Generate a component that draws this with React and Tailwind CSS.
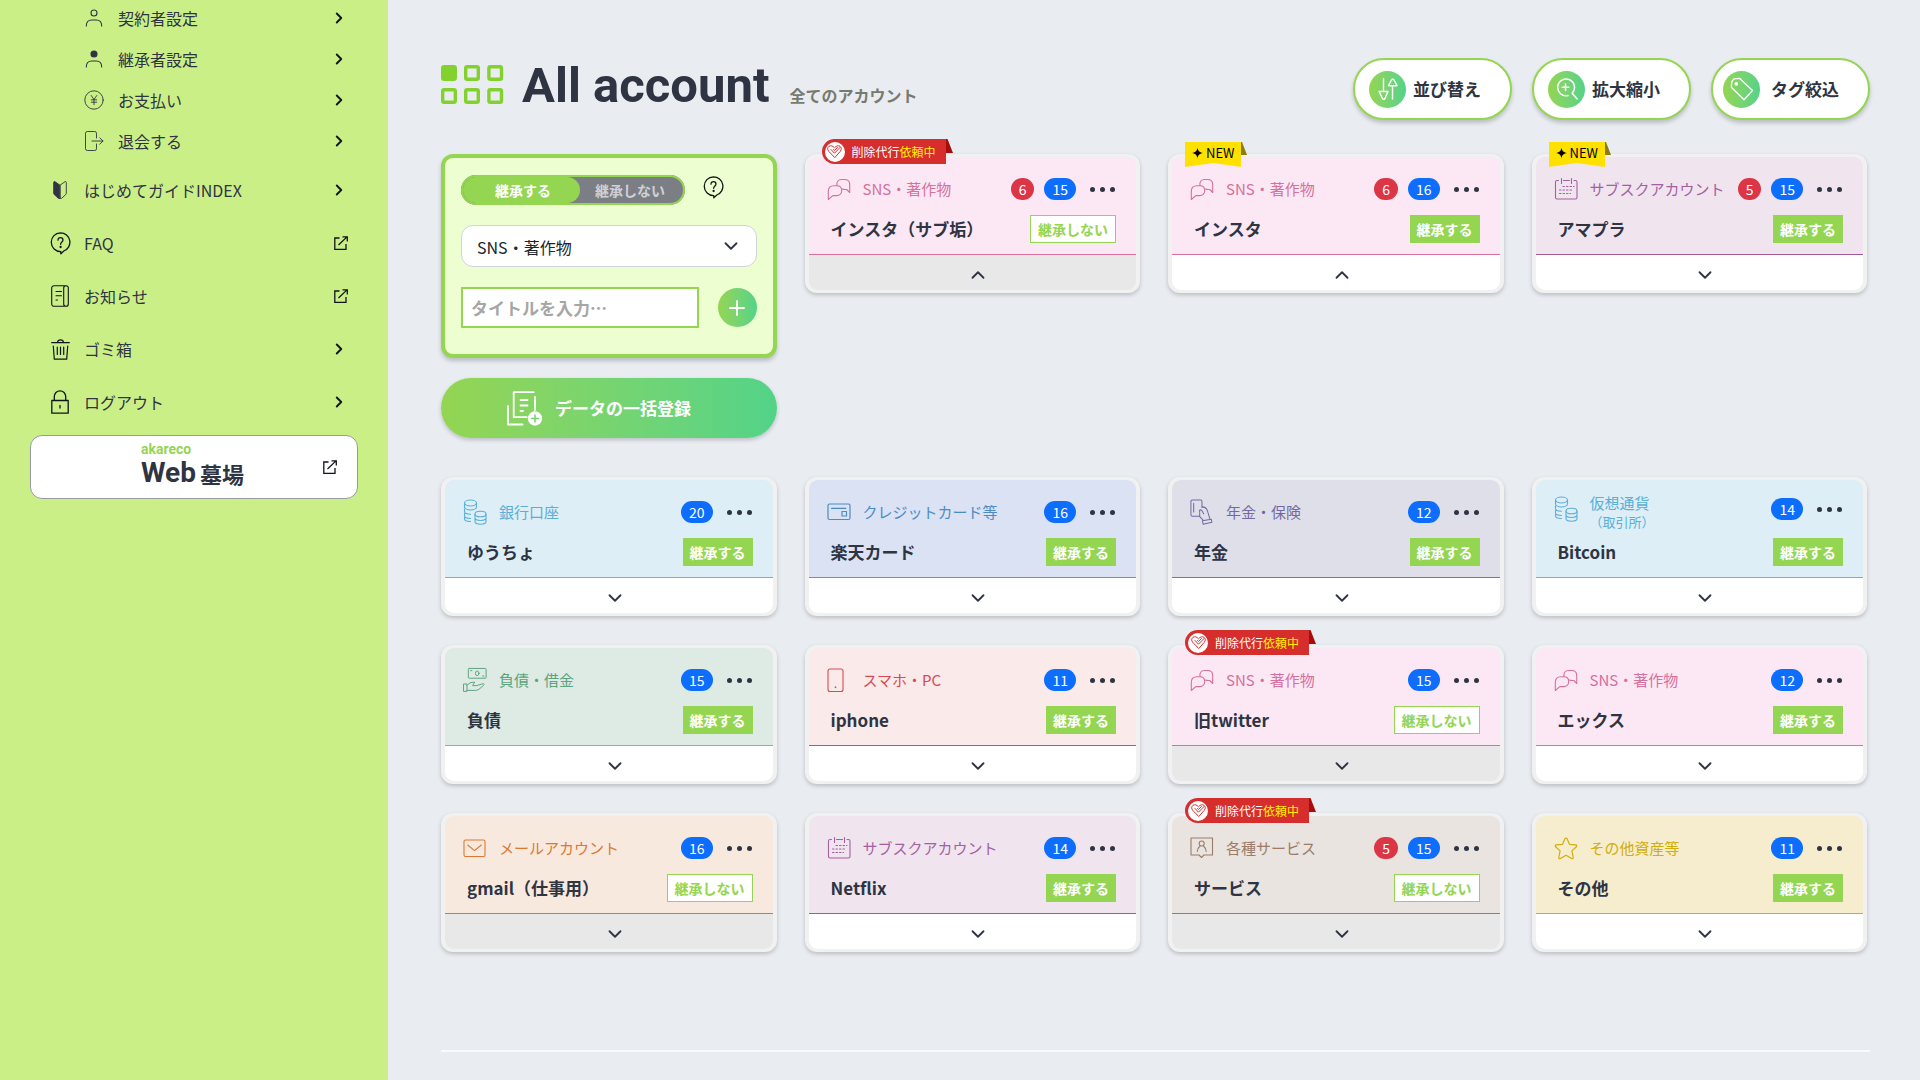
import React, { useState } from 'react';
import { ChevronDown, ChevronRight, ChevronUp } from 'lucide-react';

const line = { fill: 'none', stroke: 'currentColor', strokeLinecap: 'round', strokeLinejoin: 'round' };

/* ---------- Sidebar icons ---------- */

const UserIcon = ({ filled }) => (
  <svg width="18" height="18" viewBox="0 0 18 18" {...line} strokeWidth="1.1">
    <circle cx="9" cy="4" r="3" fill={filled ? 'currentColor' : 'none'} />
    <path d="M1.3 17c0-4 2.500-6 5.500-6h4.400c3 0 5.500 2 5.500 6" />
  </svg>
);

const YenIcon = () => (
  <svg width="20" height="20" viewBox="0 0 20 20" {...line} strokeWidth="0.9">
    <circle cx="10" cy="10" r="9.200" />
    <path d="M7.200 5.500 10 9.500l2.800-4M10 9.500v5.200M7.300 9.800h5.400M7.300 12.200h5.400" />
  </svg>
);

const LeaveIcon = () => (
  <svg width="20" height="20" viewBox="0 0 20 20" {...line} strokeWidth="0.9">
    <path d="M12.500 7V2.300A1.800 1.800 0 0 0 10.700.5H3.300A1.800 1.800 0 0 0 1.500 2.300v15.400a1.800 1.800 0 0 0 1.800 1.800h7.400a1.800 1.800 0 0 0 1.800-1.800V13M8 10h11M15.800 6.800 19 10l-3.200 3.200" />
  </svg>
);

const BeginnerIcon = () => (
  <svg width="14" height="18" viewBox="0 0 14 18" {...line} strokeWidth="0.9">
    <path d="M6.700 4 2 .7C1.200.3.7.6.7 1.400v10.800c0 .6.2 1 .6 1.400L5.500 17.400h1.200z" fill="currentColor" />
    <path d="M7.300 4 12 .7c.8-.4 1.300-.1 1.300.7v10.800c0 .6-.2 1-.6 1.400L8.500 17.400H7.300z" />
  </svg>
);

const HelpIcon = () => (
  <svg width="21" height="23" viewBox="0 0 21 23" {...line} strokeWidth="1.300">
    <path d="M10.500.8a9.400 9.400 0 0 1 3.300 18.200l-3 2.900v-2.300A9.400 9.400 0 1 1 10.500.8Z" />
    <path d="M8 8.200C8 6.600 9 5.600 10.500 5.600s2.500 1 2.500 2.400c0 1.900-2.400 2.100-2.400 4.300" />
    <circle cx="10.600" cy="15" r=".5" fill="currentColor" />
  </svg>
);

const NewsIcon = () => (
  <svg width="18" height="22" viewBox="0 0 18 22" {...line} strokeWidth="1.100">
    <path d="M15 .7H3A2.300 2.300 0 0 0 .7 3v16A2.300 2.300 0 0 0 3 21.300h12M15 .7c-1.400 0-2.300.8-2.300 2.300v16c0 1.400.8 2.300 2.300 2.300s2.300-.9 2.300-2.300V3c0-1.500-.9-2.300-2.300-2.300Z" />
    <path d="M5 6.500h5.500M5 10.700h5.500M5 15h1.500" />
  </svg>
);

const TrashIcon = () => (
  <svg width="19" height="21" viewBox="0 0 19 21" {...line} strokeWidth="1.200">
    <path d="M.7 3.700h17.600M6.500 3.500c.2-1.800 1.200-2.700 3-2.700s2.800.9 3 2.700M2.300 7l1 13.200h12.400l1-13.200M6.300 8v7.500M9.500 8v7.500M12.700 8v7.500" />
  </svg>
);

const LockIcon = () => (
  <svg width="18" height="24" viewBox="0 0 18 24" {...line} strokeWidth="1.300">
    <path d="M.8 10.500h16.400v12.700H.8zM3.300 10.500V6.500a5.700 5.700 0 0 1 11.400 0v4M9 15.500v2.500" />
  </svg>
);

const ExternalIcon = () => (
  <svg width="14" height="14" viewBox="0 0 14 14" fill="none" stroke="#10151c" strokeWidth="1.300">
    <path d="M5.500 2H.8v11.300H12V8M4.500 9 13 .9M8.500.8h4.800v4.700" />
  </svg>
);

/* ---------- Toolbar icons ---------- */

const SortIcon = () => (
  <svg width="20" height="22" viewBox="0 0 20 22" {...line} strokeWidth="1.400">
    <path d="M5.500.8v12M1 13.500h9L7 20.400c-.5 1.200-2 1.200-2.600 0zM14.500 21V8M10.500 7.700h8.500L16 2c-.6-1.100-1.900-1.100-2.500 0z" />
  </svg>
);

const ZoomIcon = () => (
  <svg width="22" height="22" viewBox="0 0 22 22" {...line} strokeWidth="1.500">
    <path d="M12 17.600a8.400 8.400 0 1 1 4.200-2.400l5 5.800M9.500 6v6.600M6.200 9.300h6.600" />
  </svg>
);

const TagIcon = () => (
  <svg width="24" height="24" viewBox="0 0 24 24" {...line} strokeWidth="1.300">
    <path d="M1.800 4.700 4 1.800 9.500 1.300 22.500 13.500 14 22.700 1.300 10.200z" />
    <circle cx="6.300" cy="6.800" r="1.200" fill="currentColor" />
  </svg>
);

const BulkIcon = () => (
  <svg width="36" height="35" viewBox="0 0 36 35" {...line} strokeWidth="1.800">
    <path d="M6.700 1.200h20M28 6v13M6.700 1.200v25h13M1 15v18.500h14.500M13.500 9h7M13.500 14.500h7M13.500 20h2.500" />
    <circle cx="28" cy="27.500" r="7.200" fill="#fff" stroke="none" />
    <path d="M28 24v7M24.500 27.500h7" stroke="#71d46c" strokeWidth="1.500" />
  </svg>
);

/* ---------- Category icons ---------- */

const ChatIcon = () => (
  <svg width="24" height="24" viewBox="0 0 24 24" {...line} strokeWidth="1.1">
    <path d="M10 8.500C9.300 4.500 11.500 2.500 14.500 2.500h3c3 0 5.200 2 5.200 5v8l-3-3c-1.500 0-3 .2-4.200-.5" />
    <path d="M1.300 22.500v-8c0-3.400 2.300-5.700 5.700-5.700h2.700c3 0 5 2 5 4.800s-2 5-5 5H5.800z" />
  </svg>
);

const CalendarIcon = () => (
  <svg width="24" height="24" viewBox="0 0 24 24" {...line} strokeWidth="1.100">
    <path d="M4.500 3.500H3A1.500 1.500 0 0 0 1.500 5v15.500A1.500 1.500 0 0 0 3 22h18.500a1.500 1.500 0 0 0 1.500-1.500V5a1.500 1.500 0 0 0-1.500-1.500H20M9.500 3.500h6M7.500 1.500v5M17.500 1.500v5" />
    <path d="M9 9.500h11M5.500 13h14M5.500 16.500h11" strokeDasharray="1.500 2" />
  </svg>
);

const CoinsIcon = () => (
  <svg width="24" height="26" viewBox="0 0 24 26" {...line} strokeWidth="1.100">
    <ellipse cx="7.500" cy="4" rx="6" ry="3" />
    <path d="M1.500 4v4c0 1.600 2.700 3 6 3s6-1.400 6-3V4M1.500 10v2.500c0 1.600 2.700 2.700 6 2.700M1.500 14.500v2.300c0 1.600 2.700 2.700 6 2.700M1.500 18.500v1.500c0 1.600 2.700 2.500 6 2.500" />
    <ellipse cx="17.500" cy="15" rx="5.500" ry="2.800" />
    <path d="M12 15v7.500c0 1.500 2.500 2.700 5.500 2.700s5.500-1.200 5.500-2.700V15M12 18.800c0 1.500 2.500 2.700 5.500 2.700s5.500-1.200 5.500-2.700" />
  </svg>
);

const CardIcon = () => (
  <svg width="24" height="18" viewBox="0 0 24 18" {...line} strokeWidth="1.200">
    <rect x="1" y="1" width="22" height="15.500" rx="1.500" />
    <path d="M4.500 5.300h14.300" />
    <rect x="15" y="8.500" width="4.500" height="4.500" />
  </svg>
);

const PensionIcon = () => (
  <svg width="26" height="28" viewBox="0 0 26 28" {...line} strokeWidth="1.100">
    <path d="M13 9V2.500A1.500 1.500 0 0 0 11.500 1h-9A1.500 1.500 0 0 0 1 2.500V17a1.500 1.500 0 0 0 1.500 1.500h8M4 4.500V14" />
    <path d="M13 8.500c2.500-.3 5 1.500 6 4.500l2.500 8.500M10.500 13.500c-1-1.500 1-2.600 2.300-1l2 3.500M10.500 14.500v4.500l3.500 3.500M13.500 23.500l9.500-1.700.7 3.400-9.500 2z" />
  </svg>
);

const DebtIcon = () => (
  <svg width="27" height="28" viewBox="0 0 27 28" {...line} strokeWidth="1.100">
    <rect x="6" y="1" width="20" height="11" rx="1" />
    <ellipse cx="16" cy="6.500" rx="2" ry="2.600" />
    <path d="M8.500 3.500h1.500M22 9.500h1.500M1 18.500h3.500v8.300H1zM4.500 20c3-3.500 6-3.800 9-3.300-2.500 1.300-1.200 1.800-2.700 3.600h4.700l6-1.900c2-.7 3 .5 1.600 1.600-4 3.500-6 5.700-9 5.700H4.500" />
  </svg>
);

const PhoneIcon = () => (
  <svg width="18" height="25" viewBox="0 0 18 25" {...line} strokeWidth="1.100">
    <rect x="1" y="1" width="15" height="22.500" rx="2" />
    <path d="M8.500 19v.3" strokeWidth="1.700" />
  </svg>
);

const MailIcon = () => (
  <svg width="24" height="19" viewBox="0 0 24 19" {...line} strokeWidth="1.100">
    <rect x="1" y="1" width="21" height="16.500" rx="1.500" />
    <path d="m4.700 6 6.800 5.600L18.300 6" />
  </svg>
);

const ServiceIcon = () => (
  <svg width="24" height="22" viewBox="0 0 24 22" {...line} strokeWidth="1.100">
    <path d="M1 1h21.500v17h-8.500l-2.500 2.500L9 18H1z" />
    <circle cx="11.700" cy="6.500" r="2.500" />
    <path d="M7.300 14.500c.3-2.500 1.500-4.500 2.700-5.500M16.200 14.500c-.3-2.500-1.500-4.500-2.700-5.500" />
  </svg>
);

const StarIcon = () => (
  <svg width="24" height="23" viewBox="0 0 24 23" {...line} strokeWidth="1.200">
    <path d="M10.900 1.700c.4-.9 1.800-.9 2.200 0l2.400 5.600 6.300.6c1 .1 1.300 1.200.6 1.900l-4.500 4.100 1.300 6.600c.2 1-.8 1.600-1.600 1.100L12 18.300l-5.600 3.300c-.8.5-1.800-.1-1.600-1.100l1.300-6.600L1.600 9.800c-.7-.7-.4-1.800.6-1.900l6.300-.6z" />
  </svg>
);

const categories = {
  sns: { label: 'SNS・著作物', icon: ChatIcon, box: 'bg-[#fbe8f4] border-[#d6709c]', text: 'text-[#d6709c]' },
  subsc: { label: 'サブスクアカウント', icon: CalendarIcon, box: 'bg-[#f0e5ef] border-[#a05a9c]', text: 'text-[#a460a0]' },
  bank: { label: '銀行口座', icon: CoinsIcon, box: 'bg-[#ddeef7] border-[#6ab3da]', text: 'text-[#5aafd6]' },
  crypto: { label: '仮想通貨', sub: '（取引所）', icon: CoinsIcon, box: 'bg-[#ddeef7] border-[#6ab3da]', text: 'text-[#5aafd6]' },
  credit: { label: 'クレジットカード等', icon: CardIcon, box: 'bg-[#dae2f4] border-[#5a98cc]', text: 'text-[#4c8cc4]' },
  pension: { label: '年金・保険', icon: PensionIcon, box: 'bg-[#dfdfe9] border-[#7d72ad]', text: 'text-[#7468a4]' },
  debt: { label: '負債・借金', icon: DebtIcon, box: 'bg-[#ddebe4] border-[#7dbb98]', text: 'text-[#5ba37e]' },
  phone: { label: 'スマホ・PC', icon: PhoneIcon, box: 'bg-[#faebea] border-[#d94a55]', text: 'text-[#d94a55]' },
  mail: { label: 'メールアカウント', icon: MailIcon, box: 'bg-[#f8e9de] border-[#dd7832]', text: 'text-[#dd7832]' },
  service: { label: '各種サービス', icon: ServiceIcon, box: 'bg-[#e9e4e0] border-[#9c7c68]', text: 'text-[#9c7c68]' },
  other: { label: 'その他資産等', icon: StarIcon, box: 'bg-[#f5edcd] border-[#d1ae0c]', text: 'text-[#d1ae0c]' }
};

const newAccounts = [
  { title: 'インスタ（サブ垢）', category: 'sns', red: 6, blue: 15, inherit: false, ribbon: 'delete', open: true },
  { title: 'インスタ', category: 'sns', red: 6, blue: 16, inherit: true, ribbon: 'new', open: true },
  { title: 'アマプラ', category: 'subsc', red: 5, blue: 15, inherit: true, ribbon: 'new' }
];

const accounts = [
  { title: 'ゆうちょ', category: 'bank', blue: 20, inherit: true },
  { title: '楽天カード', category: 'credit', blue: 16, inherit: true },
  { title: '年金', category: 'pension', blue: 12, inherit: true },
  { title: 'Bitcoin', category: 'crypto', blue: 14, inherit: true },
  { title: '負債', category: 'debt', blue: 15, inherit: true },
  { title: 'iphone', category: 'phone', blue: 11, inherit: true },
  { title: '旧twitter', category: 'sns', blue: 15, inherit: false, ribbon: 'delete' },
  { title: 'エックス', category: 'sns', blue: 12, inherit: true },
  { title: 'gmail（仕事用）', category: 'mail', blue: 16, inherit: false },
  { title: 'Netflix', category: 'subsc', blue: 14, inherit: true },
  { title: 'サービス', category: 'service', red: 5, blue: 15, inherit: false, ribbon: 'delete' },
  { title: 'その他', category: 'other', blue: 11, inherit: true }
];

const subMenu = [
  { label: '契約者設定', icon: <UserIcon /> },
  { label: '継承者設定', icon: <UserIcon filled /> },
  { label: 'お支払い', icon: <YenIcon /> },
  { label: '退会する', icon: <LeaveIcon /> }
];

const mainMenu = [
  { label: 'はじめてガイドINDEX', icon: <BeginnerIcon /> },
  { label: 'FAQ', icon: <HelpIcon />, external: true, dark: true },
  { label: 'お知らせ', icon: <NewsIcon />, external: true, dark: true },
  { label: 'ゴミ箱', icon: <TrashIcon />, dark: true },
  { label: 'ログアウト', icon: <LockIcon />, dark: true }
];

function DeleteRibbon() {
  return (
    <div className="absolute -top-[18px] left-[13px] flex">
      <div className="flex h-[25px] items-center rounded-l-full bg-[#d62d2d] pr-[10px] pl-[3px] text-xs text-white">
        <span className="mr-[7px] flex size-5 items-center justify-center rounded-full bg-white text-[#d62d2d]">
          <svg width="15" height="13" viewBox="0 0 15 13" {...line} strokeWidth="1">
            <path d="M7.500 12.300 1.600 6.200C.2 4.500.5 2.300 2 1.300s3.700-.7 5.500 1.500C9.300.6 11.500.3 13 1.300s1.800 3.200.4 4.900z" />
            <path d="m4 4.500 3.500 3.700L13 2.500M6.500 4.500l1 1 3-3" />
          </svg>
        </span>
        削除代行<span className="text-[#fff200]">依頼中</span>
      </div>
      <svg width="7" height="14" viewBox="0 0 7 14">
        <path d="M0 0h1.500L7 14H0z" fill="#a80d0d" />
      </svg>
    </div>
  );
}

function NewRibbon() {
  return (
    <div className="absolute -top-[15px] left-[13px] flex">
      <div className="flex h-[25px] items-center gap-[3px] bg-[#ffe100] px-[7px] pb-1 text-[13px] text-black [clip-path:polygon(0_0,100%_0,100%_100%,50%_84%,0_100%)]">
        <svg width="11" height="12" viewBox="0 0 12 12">
          <path d="M6 0c.5 3.500 1.800 5.300 6 6-4.200.7-5.500 2.500-6 6-.5-3.500-1.800-5.300-6-6 4.200-.7 5.500-2.500 6-6Z" />
        </svg>
        NEW
      </div>
      <svg width="6" height="13" viewBox="0 0 6 13">
        <path d="M0 0h1L6 13H0z" fill="#8c7c0b" />
      </svg>
    </div>
  );
}

function AccountCard({ account }) {
  const [open, setOpen] = useState(!!account.open);
  const category = categories[account.category];
  const Icon = category.icon;

  return (
    <article className="relative rounded-xl border-x-4 border-y-[3px] border-[#f1f1f1] bg-[#f1f1f1] shadow-[0_2px_4px_rgba(0,0,0,0.2)]">
      {account.ribbon === 'delete' && <DeleteRibbon />}
      {account.ribbon === 'new' && <NewRibbon />}
      <div className={`rounded-t-[9px] border-b pt-[10px] pr-5 pb-[11px] pl-[18px] ${category.box}`}>
        <div className={`flex h-11 justify-between ${category.sub ? 'items-start pt-[3px]' : 'items-center'}`}>
          <div className={`flex gap-3 ${category.sub ? 'items-start' : 'items-center'} ${category.text}`}>
            <span className="flex h-8 w-6 shrink-0 items-center">
              <Icon />
            </span>
            <p className="text-[15px] leading-5 whitespace-nowrap">
              {category.label}
              {category.sub && <span className="block text-[13px] leading-[17px]">{category.sub}</span>}
            </p>
          </div>
          <div className="flex h-8 items-center text-sm text-white">
            {account.red && (
              <span className="mr-[10px] flex h-[22px] items-center rounded-full bg-[#dc3545] px-2">{account.red}</span>
            )}
            <span className="mr-[13px] flex h-[22px] items-center rounded-full bg-[#0d6efd] px-2">{account.blue}</span>
            <button type="button" aria-label="メニュー" className="flex h-5 items-center gap-[5px] px-px">
              <span className="size-[5px] rounded-full bg-[#2f3443]" />
              <span className="size-[5px] rounded-full bg-[#2f3443]" />
              <span className="size-[5px] rounded-full bg-[#2f3443]" />
            </button>
          </div>
        </div>
        <div className="mt-1 flex h-7 items-center justify-between pl-1">
          <h3 className="text-[17px] font-bold whitespace-nowrap text-[#2f3443]">{account.title}</h3>
          {account.inherit ? (
            <span className="flex h-7 items-center bg-[#94d552] px-[7px] text-sm font-bold text-white">継承する</span>
          ) : (
            <span className="flex h-7 items-center border border-[#94d552] bg-white px-[7px] text-sm font-bold text-[#94d552]">
              継承しない
            </span>
          )}
        </div>
      </div>
      <button
        type="button"
        aria-label={open ? '閉じる' : '開く'}
        onClick={() => setOpen(!open)}
        className={`flex h-[35px] w-full items-center justify-center rounded-b-[9px] pt-1 pl-3 text-[#2f3443] ${account.inherit ? 'bg-white' : 'bg-[#e8e8e8]'}`}
      >
        {open ? <ChevronUp size={22} strokeWidth={2} /> : <ChevronDown size={22} strokeWidth={2} />}
      </button>
    </article>
  );
}

function ToolButton({ icon, label, className }) {
  return (
    <button
      type="button"
      className={`flex h-[62px] w-[159px] items-center rounded-full border-2 border-[#94d552] bg-white text-[17px] font-bold text-[#2f3443] shadow-[0_3px_4px_rgba(0,0,0,0.2)] ${className}`}
    >
      <span className="flex size-[37px] items-center justify-center rounded-full bg-linear-to-r from-[#94d552] to-[#52d388] text-white">
        {icon}
      </span>
      {label}
    </button>
  );
}

function Sidebar() {
  return (
    <aside className="w-[388px] shrink-0 bg-[#cbef87] text-base leading-6 text-[#2f3443]">
      <nav className="pt-[6px]">
        <ul className="flex flex-col gap-[17px]">
          {subMenu.map((item) => (
            <li key={item.label}>
              <a href="#" className="flex h-6 items-center pr-10 pl-[82px]">
                <span className="mr-3 flex w-6 justify-center">{item.icon}</span>
                {item.label}
                <ChevronRight size={18} strokeWidth={2.5} className="ml-auto text-[#10151c]" />
              </a>
            </li>
          ))}
        </ul>
        <ul className="mt-[25px] flex flex-col gap-[29px]">
          {mainMenu.map((item) => (
            <li key={item.label}>
              <a href="#" className="flex h-6 items-center pr-10 pl-12">
                <span className={`mr-3 flex w-6 justify-center ${item.dark ? 'text-[#10151c]' : ''}`}>{item.icon}</span>
                {item.label}
                <span className="ml-auto flex w-[18px] justify-end text-[#10151c]">
                  {item.external ? <ExternalIcon /> : <ChevronRight size={18} strokeWidth={2.5} />}
                </span>
              </a>
            </li>
          ))}
        </ul>
      </nav>
      <a
        href="#"
        className="mx-[30px] mt-[21px] flex h-16 items-center rounded-xl border border-[#979aa1] bg-white pr-5"
      >
        <span className="ml-[110px] flex flex-col pb-1 font-bold">
          <span className="font-['Roboto',sans-serif] text-sm leading-4 text-[#94d552]">akareco</span>
          <span className="flex items-center gap-1 text-[22px] leading-8 whitespace-nowrap">
            <span className="font-['Roboto',sans-serif] text-[28px] leading-8">Web</span>
            墓場
          </span>
        </span>
        <span className="ml-auto">
          <ExternalIcon />
        </span>
      </a>
    </aside>
  );
}

function RegisterPanel() {
  const [inherit, setInherit] = useState(true);
  const [title, setTitle] = useState('');

  return (
    <div>
      <form
        onSubmit={(e) => e.preventDefault()}
        className="rounded-xl border-4 border-[#94d552] bg-[#edffd1] px-4 pt-[17px] pb-[26px] shadow-[0_3px_4px_rgba(0,0,0,0.2)]"
      >
        <div className="flex items-start">
          <fieldset className="flex h-[30px] w-56 overflow-hidden rounded-full border-2 border-[#94d552] bg-[#7c7e86] text-sm font-bold">
            <label className="flex w-[117px] items-center justify-center rounded-r-full bg-[#94d552] pl-[3px] text-white">
              <input type="radio" name="inherit" className="sr-only" checked={inherit} onChange={() => setInherit(true)} />
              継承する
            </label>
            <label className="flex flex-1 items-center justify-center pr-[3px] text-[#cfd0d4]">
              <input type="radio" name="inherit" className="sr-only" checked={!inherit} onChange={() => setInherit(false)} />
              継承しない
            </label>
          </fieldset>
          <button type="button" aria-label="ヘルプ" className="mt-px ml-[18px] text-[#10151c]">
            <HelpIcon />
          </button>
        </div>
        <div className="mt-5 grid items-center">
          <select
            aria-label="カテゴリー"
            className="col-start-1 row-start-1 h-[42px] w-full appearance-none rounded-xl border border-[#ced4da] bg-white pt-[2px] pl-[15px] text-base text-[#212529]"
          >
            <option>SNS・著作物</option>
          </select>
          <ChevronDown size={22} className="pointer-events-none col-start-1 row-start-1 mr-[15px] justify-self-end text-[#2f3443]" />
        </div>
        <div className="mt-5 flex items-center justify-between">
          <input
            type="text"
            aria-label="タイトル"
            value={title}
            onChange={(e) => setTitle(e.target.value)}
            placeholder="タイトルを入力…"
            className="h-[41px] w-[238px] border-2 border-[#94d552] bg-white px-2 text-[17px] font-bold placeholder:text-[#a6a6a6]"
          />
          <button
            type="submit"
            aria-label="追加"
            className="flex size-[39px] items-center justify-center rounded-full bg-linear-to-r from-[#94d552] to-[#52d388] text-white"
          >
            <svg width="16" height="16" viewBox="0 0 16 16" {...line} strokeWidth="1.800">
              <path d="M8 1v14M1 8h14" />
            </svg>
          </button>
        </div>
      </form>
      <button
        type="button"
        className="mt-5 flex h-[60px] w-full items-center gap-3 rounded-full bg-linear-to-r from-[#94d552] to-[#52d388] pl-[66px] text-[17px] font-bold text-white shadow-[0_2px_4px_rgba(0,0,0,0.2)]"
      >
        <BulkIcon />
        データの一括登録
      </button>
    </div>
  );
}

export default function App() {
  return (
    <div className="flex min-h-screen bg-[#e9edf2] font-['Noto_Sans_CJK_JP','Noto_Sans',sans-serif]">
      <Sidebar />
      <main className="min-w-0 flex-1 pt-[58px] pr-[50px] pl-[53px]">
        <header className="flex h-[62px] items-start justify-between">
          <div className="flex">
            <svg className="mt-[7px]" width="63" height="40" viewBox="0 0 63 40" fill="none" stroke="#83d12e" strokeWidth="3.400">
              <rect x="1.700" y="1.700" width="12.600" height="12.600" rx="1.500" fill="#83d12e" />
              <rect x="24.700" y="1.700" width="12.600" height="12.600" rx="1.500" />
              <rect x="47.900" y="1.700" width="12.600" height="12.600" rx="1.500" />
              <rect x="1.700" y="24.700" width="12.600" height="12.600" rx="1.500" />
              <rect x="24.700" y="24.700" width="12.600" height="12.600" rx="1.500" />
              <rect x="47.900" y="24.700" width="12.600" height="12.600" rx="1.500" />
            </svg>
            <h1 className="ml-[18px] flex items-baseline gap-5 font-['Roboto',sans-serif] text-[49px] leading-[56px] font-bold text-[#2f3443]">
              All account
              <small className="font-['Noto_Sans_CJK_JP',sans-serif] text-base font-bold text-[#777a6c]">
                全てのアカウント
              </small>
            </h1>
          </div>
          <div className="flex gap-5">
            <ToolButton icon={<SortIcon />} label="並び替え" className="gap-[7px] pl-[14px]" />
            <ToolButton icon={<ZoomIcon />} label="拡大縮小" className="gap-[7px] pl-[14px]" />
            <ToolButton icon={<TagIcon />} label="タグ絞込" className="gap-[11px] pl-[10px]" />
          </div>
        </header>

        <section className="mt-[34px] grid grid-cols-4 items-start gap-7 pr-[3px]">
          <RegisterPanel />
          {newAccounts.map((account) => (
            <AccountCard key={account.title} account={account} />
          ))}
        </section>

        <section className="mt-[39px] grid grid-cols-4 gap-x-7 gap-y-[29px] pr-[3px]">
          {accounts.map((account) => (
            <AccountCard key={account.title} account={account} />
          ))}
        </section>

        <hr className="mt-[98px] border-t-2 border-white/70" />
      </main>
    </div>
  );
}
